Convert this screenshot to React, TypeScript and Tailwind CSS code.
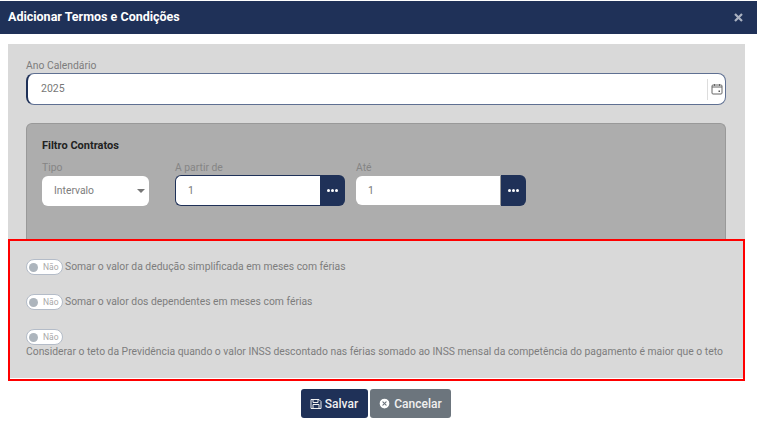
import { CircleX } from 'lucide-react';

function Lookup({ label, active }: { label: string; active?: boolean }) {
  return (
    <div className="w-[170px] flex flex-col">
      <label className="text-[10.35px] leading-[13px] h-[13px] text-[#858585] mb-[1px]">{label}</label>
      <div className="flex h-[31px]">
        <div className={`flex-1 bg-white rounded-l-[6px] flex items-center pl-[12px] text-[10.5px] text-[#777] ${active ? 'border-l border-y border-[#1f3158]' : 'my-[1px] border-r border-[#999]'}`}>1</div>
        <button className="w-[25px] bg-[#1f3158] rounded-r-[6px] flex items-center justify-center gap-[1px]">
          <span className="w-[3px] h-[3px] rounded-full bg-white" />
          <span className="w-[3px] h-[3px] rounded-full bg-white" />
          <span className="w-[3px] h-[3px] rounded-full bg-white" />
        </button>
      </div>
    </div>
  );
}

function Toggle() {
  return (
    <span className="inline-flex items-center w-[37px] h-[16px] rounded-full bg-white border border-[#b4bcc8] pl-[2px] shrink-0">
      <span className="w-[9px] h-[9px] rounded-full bg-[#adb5bd]" />
      <span className="ml-[5px] text-[8.5px] leading-none text-[#a8a8a8]">Não</span>
    </span>
  );
}

export default function App() {
  return (
    <div className="w-[757px] h-[424px] bg-white overflow-hidden pt-[1px] text-[#777]" style={{ fontFamily: 'Roboto, sans-serif' }}>
      <header className="h-[33px] bg-[#1f3158] flex items-center justify-between pl-[8px] pr-[14px]">
        <h1 className="text-[12.5px] font-bold text-white">Adicionar Termos e Condições</h1>
        <svg width="9" height="9" viewBox="0 0 9 9" className="text-[#aab2c2]">
          <path d="M1 1l7 7M8 1L1 8" stroke="currentColor" strokeWidth="2.2" />
        </svg>
      </header>

      <main className="mx-[8px] mt-[10px] w-[737px] bg-[#d9d9d9]">
        <div className="pt-[15px] px-[18px] pr-[19px]">
          <label className="block text-[10.35px] leading-[13px] h-[13px] text-[#7d7d7d] mb-[1px]">Ano Calendário</label>
          <div className="h-[32px] bg-white rounded-[8px] border border-[#5f7092] border-l-2 border-l-[#1f3158] flex items-center pl-[13px] pr-[1px] text-[10.5px] text-[#777]">
            <span className="flex-1">2025</span>
            <div className="h-[21px] border-l border-[#ddd] pl-[3px] pr-[1px] flex items-center">
              <svg width="12" height="12" viewBox="0 0 12 12" fill="none" stroke="#666">
                <rect x="1" y="2" width="10" height="9" rx="1" />
                <path d="M1 4h10M3.5 1v2M8.5 1v2" />
                <rect x="7.5" y="7.5" width="1.5" height="1.5" fill="#555" stroke="none" />
              </svg>
            </div>
          </div>

          <section className="mt-[18px] h-[116px] bg-[#adadad] border border-[#999] border-b-0 rounded-t-[6px] pl-[15px] pt-[15px]">
            <h2 className="text-[11px] leading-[14px] font-bold text-[#222]">Filtro Contratos</h2>
            <div className="flex mt-[8px] gap-[11px]">
              <div className="w-[107px] mr-[15px] flex flex-col">
                <label className="text-[10.35px] leading-[13px] h-[13px] text-[#858585] mb-[1px]">Tipo</label>
                <div className="h-[30px] mt-[1px] bg-white rounded-[6px] flex items-center justify-between pl-[12px] pr-[4px] text-[10.35px] text-[#7d7d7d]">
                  <span>Intervalo</span>
                  <span className="w-0 h-0 border-x-[4px] border-x-transparent border-t-[4px] border-t-[#777]" />
                </div>
              </div>
              <Lookup label="A partir de" active />
              <Lookup label="Até" />
            </div>
          </section>
        </div>

        <section className="h-[142px] border-2 border-[#f00] bg-white text-[10.35px] leading-[14px] text-[#7d7d7d]">
          <div className="h-[137px] bg-[#d9d9d9] px-[16px] pt-[18px]">
            <div className="flex items-center gap-[2px] h-[16px]">
              <Toggle />
              <span>Somar o valor da dedução simplificada em meses com férias</span>
            </div>
            <div className="flex items-center gap-[2px] h-[16px] mt-[19px]">
              <Toggle />
              <span>Somar o valor dos dependentes em meses com férias</span>
            </div>
            <div className="mt-[19px] h-[16px]">
              <Toggle />
            </div>
            <p className="whitespace-nowrap">Considerar o teto da Previdência quando o valor INSS descontado nas férias somado ao INSS mensal da competência do pagamento é maior que o teto</p>
          </div>
        </section>
      </main>

      <footer className="flex justify-center gap-[2px] mt-[8px] pr-[6px]">
        <button className="h-[29px] w-[67px] rounded-[3px] bg-[#1f3158] text-[#f0f0f0] text-[12px] font-medium flex items-center justify-center gap-[3px]">
          <svg width="12" height="12" viewBox="0 0 12 12" fill="none" stroke="currentColor" strokeWidth="1">
            <path d="M1 1.5h8l2 2v7H1z" />
            <path d="M3 1.5v3h5v-3M3 10.5v-4h6v4" />
          </svg>
          Salvar
        </button>
        <button className="h-[29px] w-[81px] rounded-[3px] bg-[#6c757d] text-[#f0f0f0] text-[12px] font-medium flex items-center justify-center gap-[3px]">
          <CircleX size={13} fill="white" stroke="#6c757d" strokeWidth={2} />
          Cancelar
        </button>
      </footer>
    </div>
  );
}
